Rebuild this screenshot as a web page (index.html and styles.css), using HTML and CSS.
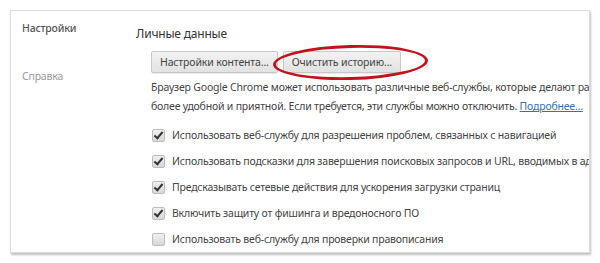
FILE: index.html
```html
<!DOCTYPE html>
<html lang="ru">
<head>
<meta charset="utf-8">
<link rel="stylesheet" href="styles.css">
</head>
<body>
<div class="card">
  <nav class="side">
    <div class="side-item active">Настройки</div>
    <div class="side-item">Справка</div>
  </nav>
  <main class="main">
    <h2 class="title">Личные данные</h2>
    <div class="section">
      <div class="buttons">
        <button class="btn">Настройки контента...</button>
        <span class="btn-wrap">
          <button class="btn">Очистить историю...</button>
          <span class="ring"></span>
        </span>
      </div>
      <p class="desc">Браузер Google Chrome может использовать различные веб-службы, которые делают работу в Интернете<br>более удобной и приятной. Если требуется, эти службы можно отключить. <a class="link" href="#">Подробнее...</a></p>
      <ul class="checks">
        <li class="row"><span class="cb on"></span>Использовать веб-службу для разрешения проблем, связанных с навигацией</li>
        <li class="row"><span class="cb on"></span>Использовать подсказки для завершения поисковых запросов и URL, вводимых в адресную строку</li>
        <li class="row"><span class="cb on"></span>Предсказывать сетевые действия для ускорения загрузки страниц</li>
        <li class="row"><span class="cb on"></span>Включить защиту от фишинга и вредоносного ПО</li>
        <li class="row"><span class="cb"></span>Использовать веб-службу для проверки правописания</li>
      </ul>
    </div>
  </main>
</div>
</body>
</html>
```
FILE: styles.css
```css
html, body {
  margin: 0;
  padding: 0;
  background: #fff;
}
body {
  padding: 10px;
  font-family: "Noto Sans", "Open Sans", sans-serif;
  font-size: 10.5px;
  letter-spacing: -0.2px;
  color: #444;
}
.card {
  width: 578px;
  height: 241px;
  border: 1px solid #dcdcdc;
  box-shadow: 1px 2px 2px rgba(0,0,0,0.25);
  display: flex;
  overflow: hidden;
  background: #fff;
}
.side {
  width: 114px;
  flex: none;
  padding: 10px 0 0 11px;
}
.side-item {
  font-size: 10.5px;
  color: #999;
  height: 48px;
}
.side-item.active {
  color: #555;
  font-weight: 500;
}
.main {
  flex: none;
  width: 600px;
  padding-top: 15px;
}
.title {
  margin: 0;
  font-size: 12px;
  font-weight: normal;
  color: #333;
  line-height: 16px;
}
.section {
  padding-left: 15px;
  padding-top: 9px;
}
.buttons {
  display: flex;
  gap: 5px;
  height: 22px;
}
.btn-wrap {
  position: relative;
  display: flex;
}
.btn {
  font-family: inherit;
  font-size: 10.5px;
  letter-spacing: -0.15px;
  color: #444;
  height: 22px;
  padding: 0 8px;
  border: 1px solid #c8c8c8;
  border-radius: 2px;
  background: linear-gradient(#f2f2f2, #e2e2e2);
  box-shadow: 0 1px 0 rgba(0,0,0,0.08);
}
.ring {
  position: absolute;
  left: -10px;
  top: -6px;
  width: 149px;
  height: 29px;
  border: 3px solid #c2121c;
  border-radius: 50%;
  transform: rotate(-1.5deg);
}
.desc {
  margin: 5px 0 0;
  line-height: 19px;
  white-space: nowrap;
  color: #444;
}
.link {
  color: #3a6fb0;
  text-decoration: underline;
}
.checks {
  list-style: none;
  margin: 6px 0 0;
  padding: 0;
}
.row {
  display: flex;
  align-items: center;
  height: 26px;
  white-space: nowrap;
}
.cb {
  flex: none;
  width: 11px;
  height: 11px;
  margin: 0 7px 0 1px;
  border: 1px solid #bcbcbc;
  border-radius: 2px;
  background: linear-gradient(#f0f0f0, #d8d8d8);
  position: relative;
}
.cb.on::after {
  content: "";
  position: absolute;
  left: 3px;
  top: 0px;
  width: 3px;
  height: 7px;
  border: solid #333;
  border-width: 0 2px 2px 0;
  transform: rotate(40deg);
}
```
